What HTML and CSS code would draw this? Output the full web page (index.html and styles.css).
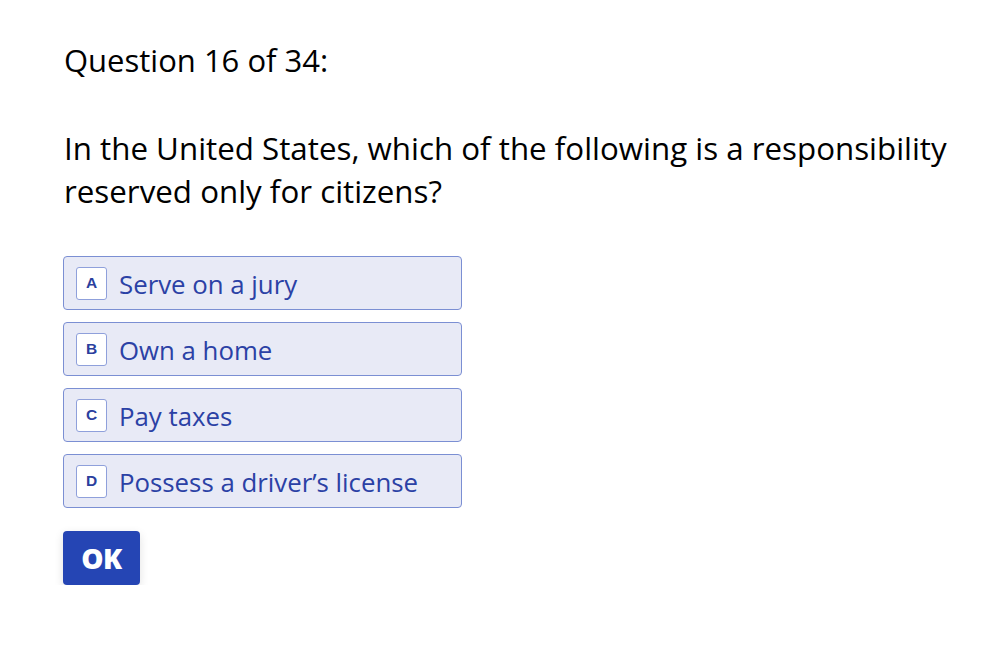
FILE: index.html
```html
<!DOCTYPE html>
<html>
<head>
<meta charset="utf-8">
<link rel="stylesheet" href="styles.css">
</head>
<body>
<main class="quiz">
  <h1 class="counter">Question 16 of 34:</h1>
  <p class="question">In the United States, which of the following is a responsibility reserved only for citizens?</p>
  <ul class="options">
    <li class="option"><span class="key">A</span><span class="label">Serve on a jury</span></li>
    <li class="option"><span class="key">B</span><span class="label">Own a home</span></li>
    <li class="option"><span class="key">C</span><span class="label">Pay taxes</span></li>
    <li class="option"><span class="key">D</span><span class="label">Possess a driver’s license</span></li>
  </ul>
  <button class="ok">OK</button>
</main>
</body>
</html>
```

FILE: styles.css
```css
html, body {
  margin: 0;
  padding: 0;
  background: #ffffff;
}
body {
  font-family: "Open Sans", "Noto Sans", sans-serif;
  color: #000000;
}
.quiz {
  padding: 38px 0 0 64px;
  width: 900px;
}
.counter {
  margin: 0;
  font-size: 31px;
  font-weight: 400;
  line-height: 44px;
}
.question {
  margin: 45px 0 0 0;
  font-size: 31.3px;
  line-height: 43px;
}
.options {
  list-style: none;
  margin: 43px 0 0 -1px;
  padding: 0;
  display: flex;
  flex-direction: column;
  gap: 12px;
}
.option {
  box-sizing: border-box;
  width: 399px;
  height: 54px;
  display: flex;
  align-items: center;
  gap: 12px;
  padding: 0 12px;
  background: #e8eaf6;
  border: 1.5px solid #7b8fd3;
  border-radius: 4px;
  color: #2b41a5;
}
.key {
  box-sizing: border-box;
  width: 31px;
  height: 33px;
  flex: none;
  display: flex;
  align-items: center;
  justify-content: center;
  background: #ffffff;
  border: 1px solid #8fa0db;
  border-radius: 3px;
  font-family: "Liberation Sans", Arial, sans-serif;
  font-weight: 700;
  font-size: 15.5px;
  color: #2b3f9e;
}
.label {
  font-size: 25.8px;
  line-height: 1;
  padding-top: 3px;
}
.ok {
  margin: 23px 0 0 -1px;
  width: 77px;
  height: 54px;
  border: none;
  border-radius: 4px;
  background: #2545b4;
  color: #ffffff;
  font-family: "Open Sans", sans-serif;
  font-weight: 800;
  font-size: 28px;
  letter-spacing: -0.5px;
  box-shadow: 0 3px 10px rgba(0, 0, 0, 0.12);
  cursor: pointer;
  padding: 0;
}
```
